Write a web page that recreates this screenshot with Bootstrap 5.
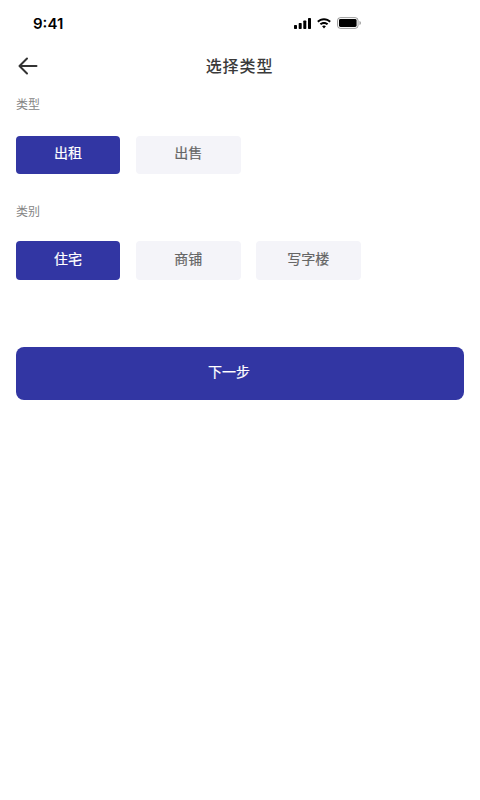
<!DOCTYPE html>
<html lang="zh">
<head>
<meta charset="utf-8">
<title>选择类型</title>
<link href="https://cdn.jsdelivr.net/npm/bootstrap@5.3.0/dist/css/bootstrap.min.css" rel="stylesheet">
<style>
html,body{height:800px;overflow:hidden;background:#fff}
body{font-family:"Inter","Noto Sans CJK SC",sans-serif}
.status-row{height:46px;padding:14px 119px 0 33px}
.clock{font:600 15px/19px "Inter",sans-serif;color:#000}
.status-icons{height:18px;gap:6px}
.head-row{height:40px;padding:0 16px}
.back-btn{width:24px;height:24px;background:none;border:0;padding:0;line-height:0}
.head-title{font:500 16px/24px "Noto Sans CJK SC",sans-serif;color:#3a3a3a;letter-spacing:.9px;margin-top:-2px;margin-left:-1px}
.sec-label{font:400 12px/16px "Noto Sans CJK SC",sans-serif;color:#858585;margin:0}
.pick-btn{width:104.500px;border-radius:4px;font:400 14px/20px "Noto Sans CJK SC",sans-serif;-webkit-text-stroke:.2px currentColor;border:0;padding:0 0 6px;letter-spacing:0}
.pick-lead{width:104px;margin-right:.5px}
.pick-on{background:#3236a3;color:#fff}
.pick-on:hover{background:#3236a3;color:#fff}
.pick-off{background:#f4f4f9;color:#666}
.pick-off:hover{background:#f4f4f9;color:#666}
.h-a{height:38px}.h-b{height:39px}
.wrap{padding:0 16px}
.lab1{padding-top:10px}
.row-a{margin-top:24px;gap:15.500px}
.lab2{margin-top:29px}
.row-b{margin-top:22px;gap:15.500px}
.next-btn{height:53px;width:100%;margin-top:67px;background:#3236a3;color:#fff;border:0;border-radius:8px;font:400 14px/20px "Noto Sans CJK SC",sans-serif;-webkit-text-stroke:.2px currentColor;padding:0 22px 6px 0}
.next-btn:hover{background:#3236a3;color:#fff}
</style>
</head>
<body>
<div class="status-row d-flex justify-content-between align-items-start">
  <span class="clock">9:41</span>
  <div class="status-icons d-flex align-items-center">
    <svg width="17" height="11" viewBox="0 0 17 11"><rect x="0" y="7" width="3" height="4" rx=".7"/><rect x="4.700" y="5" width="3" height="6" rx=".7"/><rect x="9.300" y="2.500" width="3" height="8.500" rx=".7"/><rect x="14" y="0" width="3" height="11" rx=".7"/></svg>
    <svg width="14" height="11" viewBox="1 0 14 11"><path d="M8 2.300c2 0 4 .8 5.400 2.200l1.500-1.500C13.100 1.300 10.600.2 8 .2S2.900 1.300 1.100 3l1.500 1.500C4 3.100 6 2.300 8 2.300zM8 6c1.100 0 2.100.4 2.900 1.100l1.400-1.500C11.100 4.500 9.600 3.900 8 3.900s-3.100.6-4.300 1.700l1.400 1.500C5.900 6.400 6.900 6 8 6zM8 7.600c-.8 0-1.400.3-1.900.7L8 10.600l1.900-2.300c-.5-.4-1.100-.7-1.900-.7z"/></svg>
    <svg width="24" height="12" viewBox="0 0 24.500 12"><rect x=".5" y=".5" width="21" height="11" rx="3" fill="none" stroke="#000" stroke-opacity=".4"/><rect x="2" y="2" width="18" height="8" rx="1.500"/><path d="M23 4v4c.8-.3 1.400-1.100 1.400-2S23.800 4.300 23 4z" fill-opacity=".4"/></svg>
  </div>
</div>
<div class="head-row position-relative d-flex align-items-center justify-content-center">
  <button class="back-btn position-absolute start-0 ms-3" type="button" aria-label="返回">
    <svg width="24" height="24" viewBox="0 0 24 24" fill="none" stroke="#333" stroke-width="2" stroke-linecap="round" stroke-linejoin="round"><path d="M20.500 12H4M11 4.500 3.500 12l7.500 7.500"/></svg>
  </button>
  <span class="head-title">选择类型</span>
</div>
<main class="wrap">
  <p class="sec-label lab1">类型</p>
  <div class="d-flex row-a">
    <button class="btn pick-btn pick-lead pick-on h-a" type="button">出租</button>
    <button class="btn pick-btn pick-off h-a" type="button">出售</button>
  </div>
  <p class="sec-label lab2">类别</p>
  <div class="d-flex row-b">
    <button class="btn pick-btn pick-lead pick-on h-b" type="button">住宅</button>
    <button class="btn pick-btn pick-off h-b" type="button">商铺</button>
    <button class="btn pick-btn pick-off h-b" type="button">写字楼</button>
  </div>
  <button class="btn next-btn" type="button">下一步</button>
</main>
<script src="https://cdn.jsdelivr.net/npm/bootstrap@5.3.0/dist/js/bootstrap.bundle.min.js"></script>
</body>
</html>
